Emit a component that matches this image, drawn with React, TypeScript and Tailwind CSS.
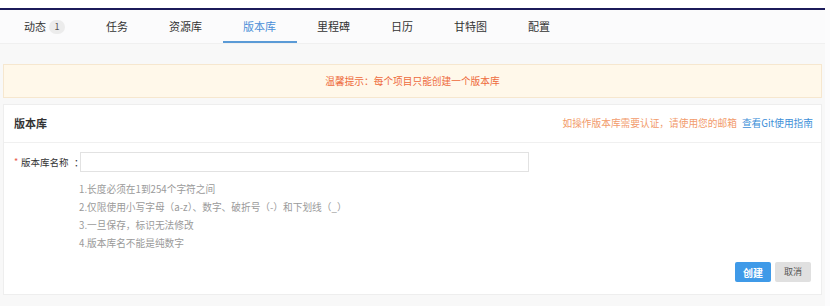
import React from 'react';

const tabs = ['任务', '资源库', '版本库', '里程碑', '日历', '甘特图', '配置'];

const hints = [
  '1.长度必须在1到254个字符之间',
  '2.仅限使用小写字母（a-z）、数字、破折号（-）和下划线（_）',
  '3.一旦保存，标识无法修改',
  '4.版本库名不能是纯数字',
];

export default function App() {
  return (
    <div
      className="w-[830px] h-[306px] overflow-hidden bg-white flex"
      style={{ fontFamily: '"Noto Sans CJK SC", "Liberation Sans", sans-serif' }}
    >
      <div className="w-[825px] flex flex-col bg-[#f8f8f8]">
        <div className="h-[8px] bg-white" />
        <div className="h-[2px] bg-[#1c1b5a]" />
        {/* tabs */}
        <div className="h-[34px] bg-[#fbfbfc] border-b border-[#f0f0f0] flex pl-[3.5px]">
          <div className="flex items-center gap-[3px] px-[20.5px] text-[11px] text-[#333]">
            动态
            <span className="w-[16px] h-[14px] rounded-full bg-[#ececec] text-[9px] text-[#555] flex items-center justify-center">
              1
            </span>
          </div>
          {tabs.map((t) => (
            <div
              key={t}
              className={
                t === '版本库'
                  ? 'flex items-center px-[20.5px] text-[11px] text-[#4a8fd8] border-b-2 border-[#5a9ad6] pt-[2px]'
                  : 'flex items-center px-[20.5px] text-[11px] text-[#333]'
              }
            >
              {t}
            </div>
          ))}
        </div>

        <div className="flex flex-col gap-[6px] px-[3px] pt-[20px]">
          <div className="h-[34px] bg-[#fff8ea] border border-[#f6e7cf] flex items-center justify-center text-[9.7px] text-[#ee6a3c]">
            温馨提示：每个项目只能创建一个版本库
          </div>

          <div className="h-[191px] bg-white border border-[#eeeeee] flex flex-col">
            <div className="h-[38px] border-b border-[#f0f0f0] flex items-center justify-between pl-[10px] pr-[8px]">
              <span className="text-[11px] font-bold text-[#333]">版本库</span>
              <div className="flex items-center gap-[5px] text-[9.7px]">
                <span className="text-[#f29b6b]">如操作版本库需要认证，请使用您的邮箱</span>
                <span className="text-[#3d8fd8]">查看Git使用指南</span>
              </div>
            </div>

            <div className="flex flex-col px-[10px] pt-[9px]">
              <div className="flex items-center h-[20px]">
                <span className="w-[60px] shrink-0 flex items-center text-[9.5px] text-[#333]">
                  <span className="text-[#e85c4a] w-[7px] text-[9px]">*</span>
                  版本库名称
                </span>
                <span className="w-[6px] shrink-0 text-[9.5px] text-[#333] whitespace-nowrap">：</span>
                <div className="w-[449px] shrink-0 h-[20px] border border-[#e2e2e2] bg-white" />
              </div>

              <div className="flex flex-col pl-[65px] mt-[8px]">
                {hints.map((h) => (
                  <div key={h} className="h-[18px] leading-[18px] text-[9.7px] text-[#9a9a9a]">
                    {h}
                  </div>
                ))}
              </div>

              <div className="flex justify-end gap-[4px] mt-[10px]">
                <button className="w-[36px] h-[20px] rounded-[2px] bg-[#3f9ae8] text-white text-[10px] font-bold">
                  创建
                </button>
                <button className="w-[36px] h-[20px] rounded-[2px] bg-[#e0e0e0] text-[#555] text-[9px]">
                  取消
                </button>
              </div>
            </div>
          </div>
        </div>
      </div>
      <div className="flex-1 bg-[#fcfcfd]" />
    </div>
  );
}
